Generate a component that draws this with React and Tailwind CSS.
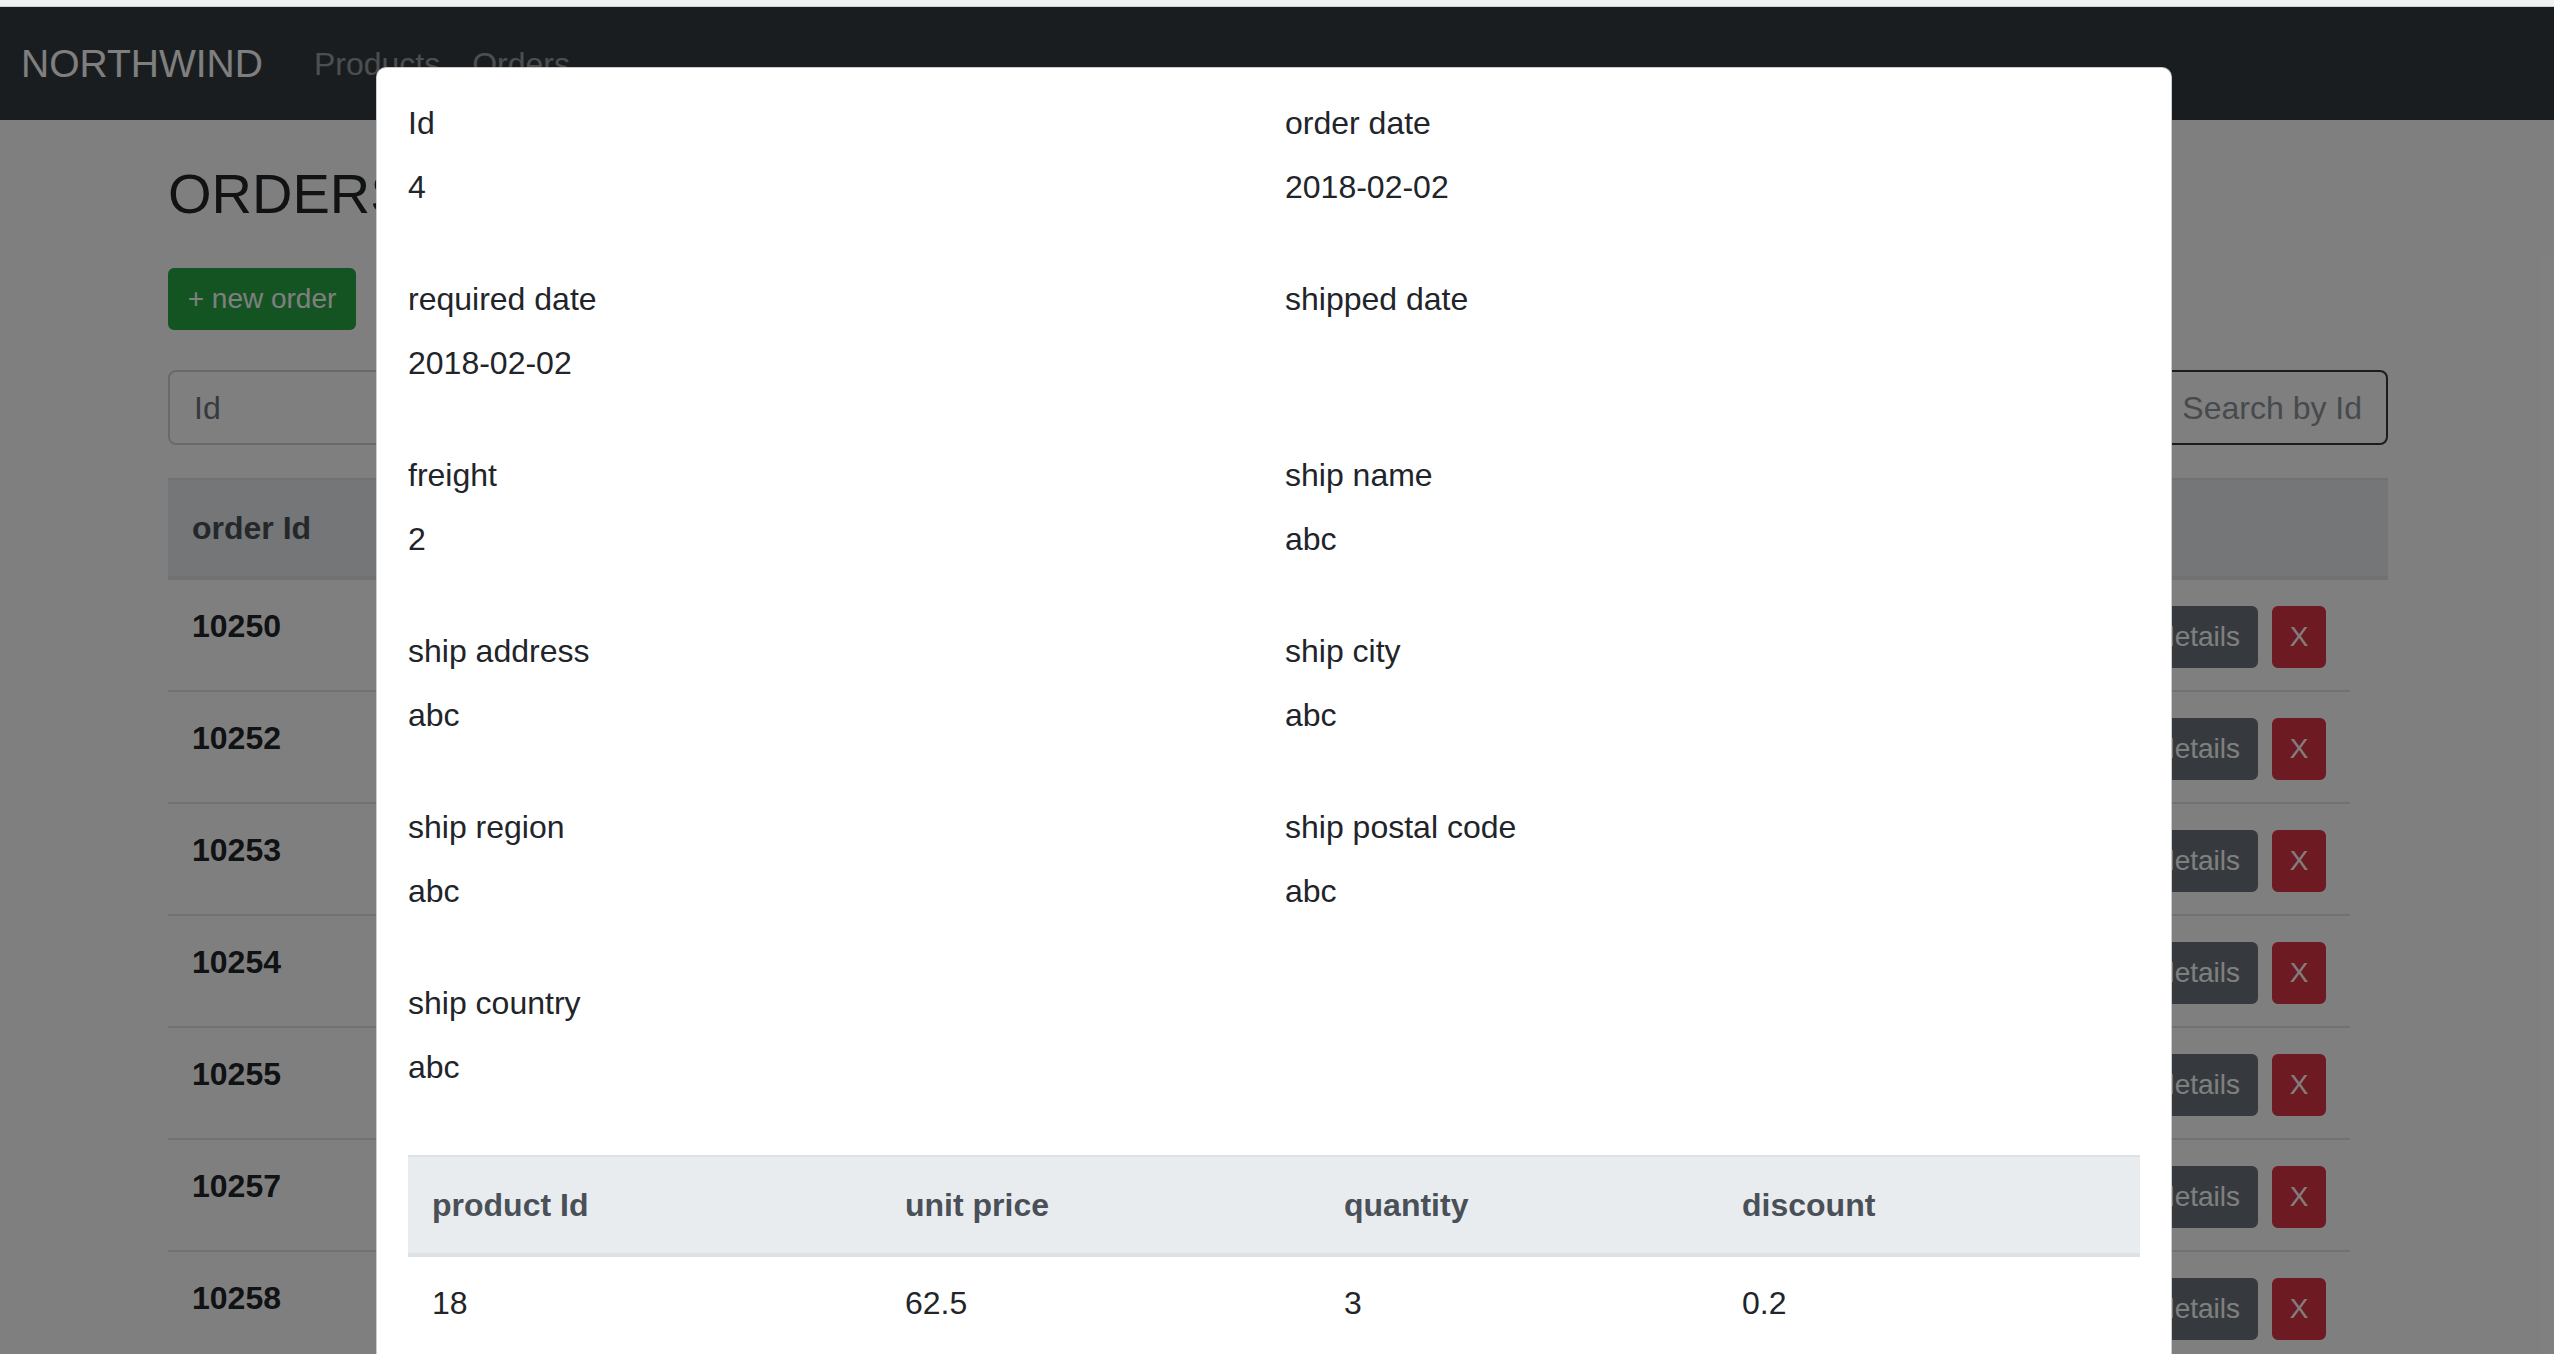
import React from "react";

const orderIds = ["10250", "10252", "10253", "10254", "10255", "10257", "10258"];

const fields = [
  ["Id", "4"],
  ["order date", "2018-02-02"],
  ["required date", "2018-02-02"],
  ["shipped date", ""],
  ["freight", "2"],
  ["ship name", "abc"],
  ["ship address", "abc"],
  ["ship city", "abc"],
  ["ship region", "abc"],
  ["ship postal code", "abc"],
  ["ship country", "abc"],
];

function Field({ label, value }) {
  return (
    <div className="mb-[64px]">
      <div className="text-[32px] leading-[48px] mb-[16px]">{label}</div>
      <div className="text-[32px] leading-[48px] min-h-[48px]">{value}</div>
    </div>
  );
}

export default function App() {
  return (
    <div className="w-full h-[1354px] overflow-hidden bg-white font-['Liberation_Sans',Arial,sans-serif] text-[#212529]">
      <div className="h-[7px] bg-[#f1f1f1] border-b border-[#d0d0d0]" />
      <div className="relative h-[1347px] overflow-hidden">
        {/* Navbar */}
        <nav className="h-[113px] bg-[#343a40] flex items-center pl-[21px]">
          <span className="text-[39px] leading-[60px] text-white mr-[35px]">NORTHWIND</span>
          <a className="px-[16px] text-[32px] leading-[48px] text-white/50">Products</a>
          <a className="px-[16px] text-[32px] leading-[48px] text-white/50">Orders</a>
        </nav>

        {/* Page content */}
        <div className="ml-[168px] w-[2220px]">
          <h3 className="mt-[40px] text-[56px] leading-[67px] font-normal">ORDERS</h3>
          <div className="mt-[41px]">
            <button className="h-[62px] w-[188px] rounded-[6px] bg-[#28a745] text-white text-[28px] leading-[42px] border-2 border-[#28a745]">
              + new order
            </button>
          </div>
          <div className="mt-[40px] flex h-[75px]">
            <div className="flex-1 border-2 border-[#ced4da] rounded-l-[8px] pl-[24px] flex items-center text-[32px] text-[#6c757d]">
              Id
            </div>
            <button className="-ml-[2px] border-2 border-[#343a40] rounded-r-[8px] px-[24px] text-[32px] text-[#8f959b]">
              Search by Id
            </button>
          </div>
          <div className="mt-[33px]">
            <div className="h-[102px] bg-[#e9ecef] border-t-2 border-b-4 border-[#dee2e6] pl-[24px] pt-[24px] text-[32px] leading-[48px] font-bold text-[#495057]">
              order Id
            </div>
            {orderIds.map((id) => (
              <div
                key={id}
                className="w-[2182px] h-[112px] border-b-2 border-[#dee2e6] flex items-start pt-[22px] pl-[24px] pr-[24px]"
              >
                <span className="text-[32px] leading-[48px] font-bold">{id}</span>
                <div className="ml-auto mt-[4px] flex gap-[14px]">
                  <button className="h-[62px] px-[16px] rounded-[6px] bg-[#6c757d] border-2 border-[#6c757d] text-white text-[28px]">
                    details
                  </button>
                  <button className="h-[62px] w-[54px] rounded-[6px] bg-[#dc3545] border-2 border-[#dc3545] text-white text-[28px]">
                    X
                  </button>
                </div>
              </div>
            ))}
          </div>
        </div>

        {/* Backdrop */}
        <div className="absolute inset-0 bg-black/50" />

        {/* Modal */}
        <div className="absolute left-[376px] top-[60px] w-[1796px] h-[1400px] bg-white border border-black/20 rounded-[10px] px-[31px] pt-[31px]">
          <div className="grid grid-cols-[877px_1fr]">
            {fields.map(([l, v]) => (
              <Field key={l} label={l} value={v} />
            ))}
          </div>
          <table className="w-full table-fixed border-collapse text-[32px] leading-[48px]">
            <colgroup>
              <col className="w-[473px]" />
              <col className="w-[439px]" />
              <col className="w-[398px]" />
              <col />
            </colgroup>
            <thead>
              <tr>
                {["product Id", "unit price", "quantity", "discount"].map((h) => (
                  <th
                    key={h}
                    className="bg-[#e9ecef] text-[#495057] font-bold text-left px-[24px] pt-[24px] pb-[24px] border-t-2 border-b-4 border-[#dee2e6]"
                  >
                    {h}
                  </th>
                ))}
              </tr>
            </thead>
            <tbody>
              <tr>
                {["18", "62.5", "3", "0.2"].map((c, i) => (
                  <td key={i} className="px-[24px] pt-[22px] pb-[24px]">
                    {c}
                  </td>
                ))}
              </tr>
            </tbody>
          </table>
        </div>
      </div>
    </div>
  );
}
